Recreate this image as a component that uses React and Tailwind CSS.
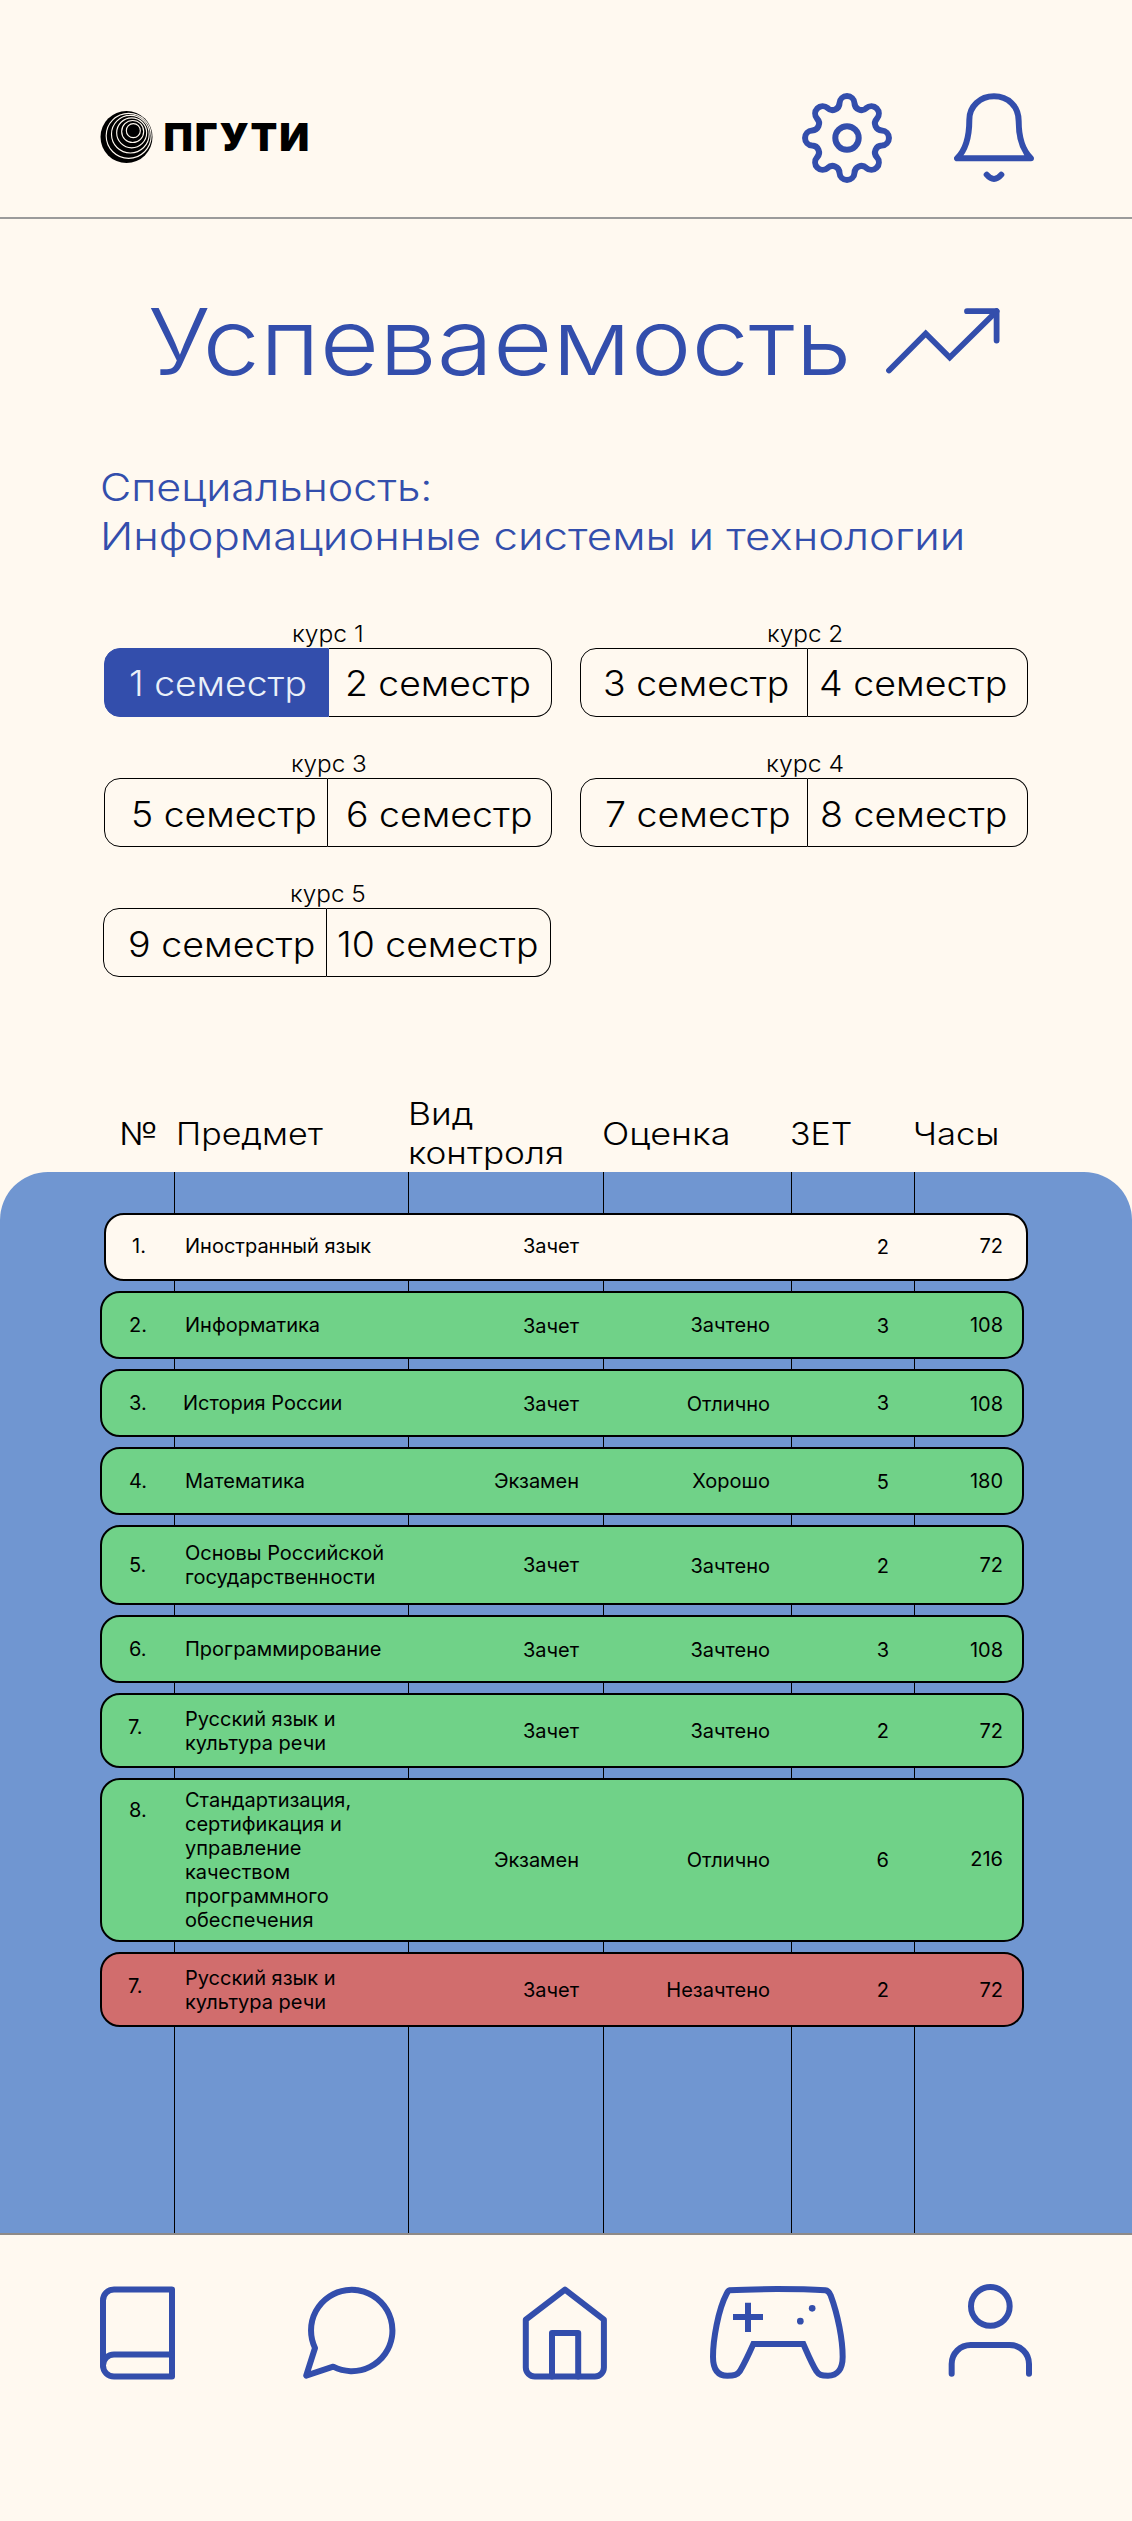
import React from "react";

/* ---------- icons ---------- */

function gearPath(cx, cy) {
  const lobeDist = 34.7;
  const lobeR = 7.5;
  const valleyDist = 37.85;
  const valleyR = 7;
  const at = (deg, d) => {
    const a = (deg * Math.PI) / 180;
    return [Math.sin(a) * d, -Math.cos(a) * d];
  };
  const touch = (lobe, valley) => {
    const t = lobeR / (lobeR + valleyR);
    return [
      (cx + lobe[0] + (valley[0] - lobe[0]) * t).toFixed(2),
      (cy + lobe[1] + (valley[1] - lobe[1]) * t).toFixed(2),
    ];
  };
  let d = "";
  for (let k = 0; k < 8; k++) {
    const lobe = at(k * 45, lobeDist);
    const before = touch(lobe, at(k * 45 - 22.5, valleyDist));
    const after = touch(lobe, at(k * 45 + 22.5, valleyDist));
    d += k === 0 ? `M${before[0]} ${before[1]}` : `A${valleyR} ${valleyR} 0 0 0 ${before[0]} ${before[1]}`;
    d += `A${lobeR} ${lobeR} 0 0 1 ${after[0]} ${after[1]}`;
  }
  const close = touch(at(0, lobeDist), at(-22.5, valleyDist));
  return `${d}A${valleyR} ${valleyR} 0 0 0 ${close[0]} ${close[1]}Z`;
}

const stroke = {
  fill: "none",
  stroke: "#334EAC",
  strokeLinecap: "round",
  strokeLinejoin: "round",
};

const LogoMark = () => (
  <svg viewBox="60 94 159 156" className="mt-[19px] h-[52px] w-[53px] shrink-0">
    <circle cx="139.5" cy="172" r="78" fill="#000" />
    <g fill="none" stroke="#FFF9F0" strokeWidth="3.4">
      <circle cx="146" cy="168.5" r="67.5" />
      <circle cx="151" cy="163.5" r="56.5" />
      <circle cx="155" cy="159.5" r="45" />
      <circle cx="158" cy="155.5" r="33" />
      <circle cx="160" cy="153" r="21" />
    </g>
  </svg>
);

const GearIcon = () => (
  <svg viewBox="0 0 92 92" className="h-[92px] w-[92px] shrink-0" {...stroke} strokeWidth="6">
    <path d={gearPath(46, 46)} />
    <circle cx="46" cy="46" r="11.7" />
  </svg>
);

const BellIcon = () => (
  <svg viewBox="522 68 240 270" className="mt-[0.7px] h-[90px] w-[80px] shrink-0" {...stroke} strokeWidth="18">
    <path d="M531 264H753C728 240 716 200 716 152C716 108 684 78 642 78C600 78 568 108 568 148C568 200 556 240 531 264Z" />
    <path d="M620 313Q642 339 664 313" />
  </svg>
);

const TrendIcon = () => (
  <svg viewBox="885 306 116 69" className="mt-[21px] h-[69px] w-[116px] shrink-0" {...stroke} strokeWidth="5.8">
    <path d="M889 370.5L925.7 333.5L949.7 357.5L996.6 311.2" strokeLinejoin="miter" />
    <path d="M967 311.2H996.6V340.5" />
  </svg>
);

const BookIcon = () => (
  <svg viewBox="100 2284 76 96" className="h-[96px] w-[76px]" {...stroke} strokeWidth="6">
    <path d="M172 2289.5H114a11 11 0 0 0-11 11V2365.5a11 11 0 0 0 11 11H172Z" />
    <path d="M103 2365.5a11 11 0 0 1 11-11H172" />
  </svg>
);

const ChatIcon = () => (
  <svg viewBox="302 2284 94 96" className="ml-[126px] h-[96px] w-[94px]" {...stroke} strokeWidth="6">
    <path d="M315 2348A40.7 40.7 0 1 1 333.2 2366.7L306.2 2375.6Z" />
  </svg>
);

const HomeIcon = () => (
  <svg viewBox="522 2284 86 96" className="ml-[126px] h-[96px] w-[86px]" {...stroke} strokeWidth="6">
    <path d="M565 2289.7L603.9 2319.7V2367.5a9 9 0 0 1-9 9H534.8a9 9 0 0 1-9-9V2319.7Z" />
    <path d="M552 2376.5V2333H578.2V2376.5" />
  </svg>
);

const GamepadIcon = () => (
  <svg viewBox="210 222 408 288" className="ml-[102px] h-[96px] w-[136px]" {...stroke} strokeWidth="18">
    <path
      strokeLinejoin="miter"
      d="M268 241C340 236 480 236 556 241Q566 242 572 256C594 315 608 390 608 440C608 478 592 497 564 497C544 497 537 495 529 483C515 461 502 429 490 402H340C328 429 313 461 300 483C292 495 282 497 262 497C234 497 219 478 219 440C219 390 234 300 260 251Q264 242 268 241Z"
    />
    <path d="M324 278V366M279 321H369" strokeLinecap="butt" />
    <circle cx="516.5" cy="295" r="10" fill="#334EAC" stroke="none" />
    <circle cx="481" cy="333.5" r="10" fill="#334EAC" stroke="none" />
  </svg>
);

const UserIcon = () => (
  <svg viewBox="924 222 252 288" className="ml-[102px] h-[96px] w-[84px]" {...stroke} strokeWidth="18">
    <circle cx="1051" cy="289" r="58" />
    <path d="M935 491V462C935 430 961 405 992 405H1109C1141 405 1167 430 1167 462V491" />
  </svg>
);

/* ---------- semesters ---------- */

const courses = [
  {
    label: "курс 1",
    labelClass: "pl-[188px]",
    labelScale: "scale-x-[1.065]",
    box: "",
    left: { text: "1 семестр", cls: "w-[225px] border-[#334EAC] bg-[#334EAC] pt-px pl-[24px] text-[#EAF0F8]", scale: "scale-x-[1.075]" },
    right: { text: "2 семестр", cls: "pt-px pl-[16px]", scale: "scale-x-[1.074]" },
  },
  {
    label: "курс 2",
    labelClass: "pl-[187px]",
    labelScale: "scale-x-[1.055]",
    box: "",
    left: { text: "3 семестр", cls: "w-[228px] border-black pt-px pl-[22px]", scale: "scale-x-[1.077]" },
    right: { text: "4 семестр", cls: "pt-px pl-[11px]", scale: "scale-x-[1.084]" },
  },
  {
    label: "курс 3",
    labelClass: "pl-[187px]",
    labelScale: "scale-x-[1.051]",
    box: "",
    left: { text: "5 семестр", cls: "w-[224px] border-black pt-[2px] pl-[26px]", scale: "scale-x-[1.077]" },
    right: { text: "6 семестр", cls: "pt-[2px] pl-[18px]", scale: "scale-x-[1.080]" },
  },
  {
    label: "курс 4",
    labelClass: "pl-[186px]",
    labelScale: "scale-x-[1.075]",
    box: "",
    left: { text: "7 семестр", cls: "w-[228px] border-black pt-[2px] pl-[24px]", scale: "scale-x-[1.083]" },
    right: { text: "8 семестр", cls: "pt-[2px] pl-[12px]", scale: "scale-x-[1.083]" },
  },
  {
    label: "курс 5",
    labelClass: "pl-[187px]",
    labelScale: "scale-x-[1.055]",
    box: "-ml-px",
    left: { text: "9 семестр", cls: "w-[224px] border-black pt-[2px] pl-[24px]", scale: "scale-x-[1.084]" },
    right: { text: "10 семестр", cls: "pt-[2px] pl-[10px]", scale: "scale-x-[1.077]" },
  },
];

const Course = ({ label, labelClass, labelScale, box, left, right }) => (
  <div className={`w-[448px] ${box}`}>
    <p className={`flex h-[28px] text-[23.1px] leading-[28px] ${labelClass}`}>
      <span className={`origin-left ${labelScale}`}>{label}</span>
    </p>
    <div className="flex h-[69px] text-[34.7px] leading-[67px]">
      <button className={`flex shrink-0 rounded-l-2xl border whitespace-nowrap ${left.cls}`}>
        <span className={`origin-left ${left.scale}`}>{left.text}</span>
      </button>
      <button className={`flex grow rounded-r-2xl border border-l-0 border-black whitespace-nowrap ${right.cls}`}>
        <span className={`origin-left ${right.scale}`}>{right.text}</span>
      </button>
    </div>
  </div>
);

/* ---------- table ---------- */

const wide = "ml-[100px] grid-cols-[83px_234px_160px_191px_119px_114px]";
const green = `${wide} bg-[#70D288]`;
const rows = [
  {
    row: "ml-[104px] h-[68px] grid-cols-[79px_234px_160px_191px_119px_114px] bg-[#FFF9F0]",
    cells: [["1.", "pl-[26px] pt-[19px]"], ["Иностранный язык", "pt-[19px]"], ["Зачет", "pt-[19px]"], ["", ""], ["2", "pt-[20px]"], ["72", "pt-[19px]"]],
  },
  {
    row: `h-[68px] ${green}`,
    cells: [["2.", "pl-[27px] pt-[20px]"], ["Информатика", "pt-[20px]"], ["Зачет", "pt-[21px]"], ["Зачтено", "pt-[20px]"], ["3", "pt-[21px]"], ["108", "pt-[20px]"]],
  },
  {
    row: `h-[68px] ${green}`,
    cells: [["3.", "pl-[27px] pt-[20px]"], ["История России", "-ml-[2px] pt-[20px]"], ["Зачет", "pt-[21px]"], ["Отлично", "pt-[21px]"], ["3", "pt-[20px]"], ["108", "pt-[21px]"]],
  },
  {
    row: `h-[68px] ${green}`,
    cells: [["4.", "pl-[27px] pt-[20px]"], ["Математика", "pt-[20px]"], ["Экзамен", "pt-[20px]"], ["Хорошо", "pt-[20px]"], ["5", "pt-[21px]"], ["180", "pt-[20px]"]],
  },
  {
    row: `h-[80px] ${green}`,
    cells: [["5.", "pl-[27px] pt-[26px]"], ["Основы Российской\nгосударственности", "pt-[14px]"], ["Зачет", "pt-[26px]"], ["Зачтено", "pt-[27px]"], ["2", "pt-[27px]"], ["72", "pt-[26px]"]],
  },
  {
    row: `h-[68px] ${green}`,
    cells: [["6.", "pl-[27px] pt-[20px]"], ["Программирование", "pt-[20px]"], ["Зачет", "pt-[21px]"], ["Зачтено", "pt-[21px]"], ["3", "pt-[21px]"], ["108", "pt-[21px]"]],
  },
  {
    row: `h-[75px] ${green}`,
    cells: [["7.", "pl-[26px] pt-[20px]"], ["Русский язык и\nкультура речи", "pt-[12px]"], ["Зачет", "pt-[24px]"], ["Зачтено", "pt-[24px]"], ["2", "pt-[24px]"], ["72", "pt-[24px]"]],
  },
  {
    row: `h-[164px] ${green}`,
    cells: [["8.", "pl-[27px] pt-[18px]"], ["Стандартизация,\nсертификация и\nуправление\nкачеством\nпрограммного\nобеспечения", "pt-[8px]"], ["Экзамен", "pt-[68px]"], ["Отлично", "pt-[68px]"], ["6", "pt-[68px]"], ["216", "pt-[67px]"]],
  },
  {
    row: `h-[75px] ${wide} bg-[#D16D6D]`,
    cells: [["7.", "pl-[26px] pt-[20px]"], ["Русский язык и\nкультура речи", "pt-[12px]"], ["Зачет", "pt-[24px]"], ["Незачтено", "pt-[24px]"], ["2", "pt-[24px]"], ["72", "pt-[24px]"]],
  },
];

export default function App() {
  return (
    <div className="flex h-[2521px] w-[1132px] flex-col overflow-hidden bg-[#FFF9F0] font-['Inter',sans-serif] font-light text-black">
      <header className="flex h-[219px] shrink-0 items-start border-b-2 border-[#9B9B9B] pt-[92px] pl-[100px]">
        <LogoMark />
        <span className="mt-[21px] ml-[10.5px] w-[637.5px] text-[39px] leading-[48px] font-black tracking-[1.9px]">ПГУТИ</span>
        <GearIcon />
        <div className="w-[61px] shrink-0" />
        <BellIcon />
      </header>

      <div className="mt-[66px] flex h-[112px] shrink-0 items-start pl-[148px] text-[#334EAC]">
        <h1 className="w-[737px] shrink-0 text-[92.4px] leading-[112px] font-light">
          <span className="inline-block origin-left scale-x-[1.110]">Успеваемость</span>
        </h1>
        <TrendIcon />
      </div>

      <div className="mt-[66px] flex shrink-0 flex-col items-start pl-[99.5px] text-[38.5px] leading-[49px] whitespace-nowrap text-[#334EAC]">
        <p className="origin-left scale-x-[1.116]">Специальность:</p>
        <p className="origin-left scale-x-[1.137]">Информационные системы и технологии</p>
      </div>

      <section className="mt-[59px] ml-[104px] grid w-[924px] shrink-0 grid-cols-[448px_448px] gap-x-[28px] gap-y-[33px]">
        {courses.map((c) => (
          <Course key={c.label} {...c} />
        ))}
      </section>

      <div className="mt-[117px] grid h-[78px] shrink-0 grid-cols-[174px_234px_195px_188px_123px_218px] items-center text-[30.8px] leading-[39px] whitespace-nowrap">
        <div className="flex pt-px pl-[119px]"><span className="origin-left scale-x-[1.176]">№</span></div>
        <div className="flex pt-px pl-[2px]"><span className="origin-left scale-x-[1.104]">Предмет</span></div>
        <div className="flex flex-col items-start">
          <span className="origin-left scale-x-[1.151]">Вид</span>
          <span className="origin-left scale-x-[1.143]">контроля</span>
        </div>
        <div className="-ml-px flex pt-px"><span className="origin-left scale-x-[1.167]">Оценка</span></div>
        <div className="-ml-px flex pt-px"><span className="origin-left scale-x-[1.102]">ЗЕТ</span></div>
        <div className="-ml-px flex pt-px"><span className="origin-left scale-x-[1.122]">Часы</span></div>
      </div>

      <main className="grid h-[1061px] shrink-0 rounded-t-[48px] bg-[#7096D1]">
        <div className="grid grid-cols-[174px_234px_195px_188px_123px_218px] [grid-area:1/1]">
          <div />
          <div className="border-l border-black" />
          <div className="border-l border-black" />
          <div className="border-l border-black" />
          <div className="border-l border-black" />
          <div className="border-l border-black" />
        </div>
        <div className="flex flex-col gap-[10px] pt-[41px] text-[20px] leading-[24px] font-normal [grid-area:1/1]">
          {rows.map(({ row, cells }, i) => (
            <div key={i} className={`grid w-[924px] shrink-0 rounded-[20px] border-2 border-black ${row}`}>
              {cells.map(([text, cls], j) => (
                <div key={j} className={`whitespace-pre ${j > 1 ? "text-right" : ""} ${cls}`}>
                  {text}
                </div>
              ))}
            </div>
          ))}
        </div>
      </main>

      <nav className="flex grow items-start border-t-2 border-[#8E8A88] pt-[49px] pl-[100px]">
        <BookIcon />
        <ChatIcon />
        <HomeIcon />
        <GamepadIcon />
        <UserIcon />
      </nav>
    </div>
  );
}
